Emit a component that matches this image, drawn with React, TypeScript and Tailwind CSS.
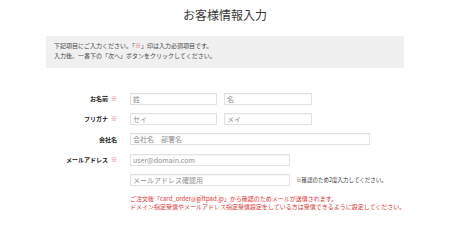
import React from "react";

const inputCls =
  "h-[12px] border border-[#e2e2e2] bg-white px-[2px] text-[7px] leading-[10px] text-[#333] placeholder:text-[#8f8f8f] outline-none shadow-[inset_0_1px_1px_rgba(0,0,0,0.04)]";

function Req() {
  return <span className="ml-[3px] text-[#e06a6a]">※</span>;
}

export default function App() {
  return (
    <div
      className="w-[450px] h-[220px] bg-white overflow-hidden"
      style={{ fontFamily: '"Noto Sans CJK JP", "Noto Sans", sans-serif' }}
    >
      <h1 className="pt-[7px] text-center text-[12px] leading-[16px] font-normal text-[#3a3a3a]">
        お客様情報入力
      </h1>
      <div className="mx-[46px] mt-[13px] h-[32px] bg-[#f0f0f0] px-[8px] pt-[5px] text-[6px] leading-[9.5px] text-[#444]">
        <p>
          下記項目にご入力ください。「<span className="text-[#e06a6a]">※</span>」印は入力必須項目です。
        </p>
        <p>入力後、一番下の「次へ」ボタンをクリックしてください。</p>
      </div>

      <div className="mt-[24.5px] grid grid-cols-[117px_1fr] gap-x-[13px] gap-y-[8.4px] items-center">
        <div className="text-right text-[6px] font-bold text-[#222]">
          お名前<Req />
        </div>
        <div className="flex gap-[7px]">
          <input className={`${inputCls} w-[87px]`} placeholder="姓" />
          <input className={`${inputCls} w-[88px]`} placeholder="名" />
        </div>

        <div className="text-right text-[6px] font-bold text-[#222]">
          フリガナ<Req />
        </div>
        <div className="flex gap-[7px]">
          <input className={`${inputCls} w-[87px]`} placeholder="セイ" />
          <input className={`${inputCls} w-[88px]`} placeholder="メイ" />
        </div>

        <div className="text-right text-[6px] font-bold text-[#222]">会社名</div>
        <div className="flex">
          <input className={`${inputCls} w-[240px]`} placeholder="会社名　部署名" />
        </div>

        <div className="text-right text-[6px] font-bold text-[#222]">
          メールアドレス<Req />
        </div>
        <div className="flex">
          <input className={`${inputCls} w-[160px]`} placeholder="user@domain.com" />
        </div>

        <div />
        <div className="flex items-center gap-[6px]">
          <input className={`${inputCls} w-[160px]`} placeholder="メールアドレス確認用" />
          <span className="text-[5.5px] text-[#333]">※確認のため2度入力してください。</span>
        </div>

        <div />
        <div className="mt-[0.5px] text-[6px] leading-[8.3px] text-[#dd3333]">
          <p>ご注文後「card_order@giftpad.jp」から確認のためメールが送信されます。</p>
          <p>ドメイン指定受信やメールアドレス指定受信設定をしている方は受信できるように設定してください。</p>
        </div>
      </div>
    </div>
  );
}
